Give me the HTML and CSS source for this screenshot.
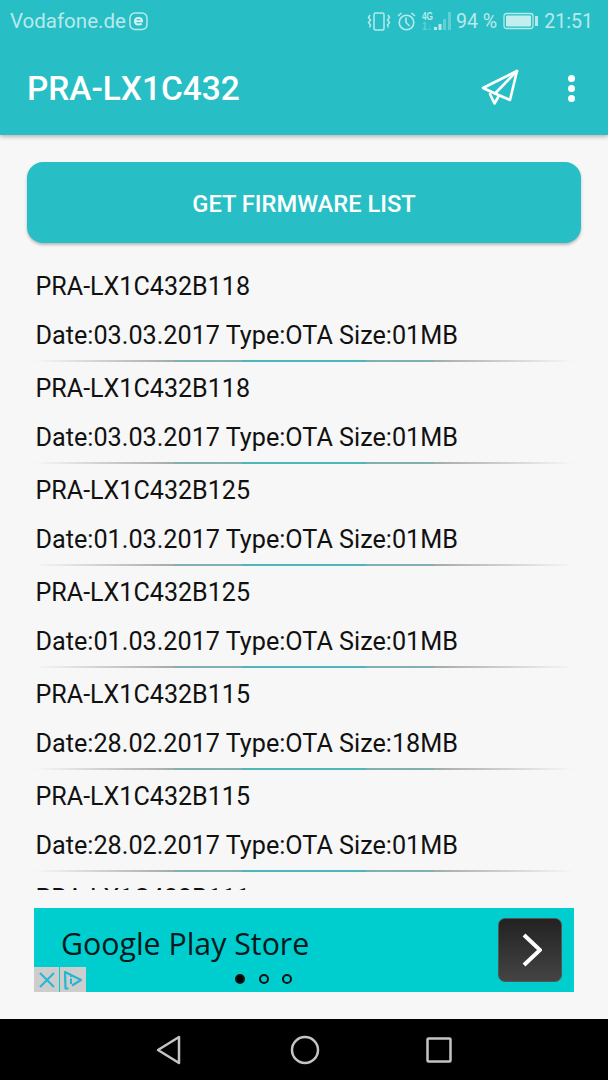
FILE: index.html
```html
<!DOCTYPE html>
<html lang="en">

<head>
    <meta charset="UTF-8">
    <meta name="viewport" content="width=device-width, initial-scale=1.0">
    <title>PRA-LX1C432</title>
    <link rel="stylesheet" href="styles.css">
</head>

<body>
    <div class="app">
        <header class="app-header">
            <div class="status-bar">
                <div class="status-left">
                    <span>Vodafone.de</span>
                    <svg class="eset-icon" width="20" height="20" viewBox="0 0 20 20">
                        <rect x="1" y="2" width="17" height="16.500" rx="5" fill="none" stroke="#b9e9eb" stroke-width="1.500"/>
                        <path d="M6 10.200h7c0-2-1.400-3.300-3.400-3.300S6 8.200 6 10.200s1.500 3.300 3.600 3.300c1.200 0 2.300-.4 3-1" fill="none" stroke="#d5f3f4" stroke-width="2"/>
                    </svg>
                </div>
                <div class="status-right">
                    <svg width="24" height="20" viewBox="0 0 24 20" fill="none" stroke="#b9e9eb" stroke-width="1.500">
                        <rect x="7" y="2" width="10" height="17" rx="1.500"/>
                        <path d="M3 4 1.500 6.500 3.500 9 1.500 11.500 3.500 14 2.500 16.500M21 4l1.500 2.500-2 2.500 2 2.500-2 2.500 1 2.500"/>
                    </svg>
                    <svg width="19" height="20" viewBox="0 0 19 20" fill="none" stroke="#b9e9eb" stroke-width="1.600">
                        <circle cx="9.500" cy="11.500" r="7.300"/>
                        <path d="M9 6.500V11.500l3.500 3.500M1 5l3.500-3M18 5l-3.500-3"/>
                    </svg>
                    <svg class="signal-icon" width="30" height="20" viewBox="0 0 30 20">
                        <text x="0" y="9" class="signal-label" textLength="11" lengthAdjust="spacingAndGlyphs">4G</text>
                        <text x="0" y="19" class="signal-label signal-dim" textLength="10" lengthAdjust="spacingAndGlyphs">1↓</text>
                        <g fill="#b9e9eb">
                            <rect x="12" y="16" width="3" height="3"/>
                            <rect x="16.500" y="13" width="3" height="6"/>
                        </g>
                        <g fill="#b9e9eb" opacity="0.4">
                            <rect x="21" y="8" width="3" height="11"/>
                            <rect x="26" y="1" width="3" height="18"/>
                        </g>
                    </svg>
                    <span class="battery-text">94 %</span>
                    <svg class="battery-icon" width="35" height="20" viewBox="0 0 35 20">
                        <rect x="1" y="2.500" width="29" height="15" rx="2.500" fill="none" stroke="#b9e9eb" stroke-width="1.300"/>
                        <rect x="3" y="4.500" width="25" height="11" rx="1" fill="#c3eeef"/>
                        <rect x="32" y="5" width="3" height="10" fill="#b9e9eb"/>
                    </svg>
                    <span class="status-time">21:51</span>
                </div>
            </div>
            <div class="toolbar">
                <h1 class="toolbar-title">PRA-LX1C432</h1>
                <svg class="send-icon" width="38" height="36" viewBox="0 0 38 36" fill="none" stroke="#fff" stroke-width="2.600" stroke-linejoin="round" stroke-linecap="round">
                    <path d="M36 2 2 19l12 5.500L29 31z"/>
                    <path d="M36 2 14 24.500"/>
                    <path d="M9 25l4.500 9.500 4-7"/>
                </svg>
                <div class="more-icon">
                    <span></span>
                    <span></span>
                    <span></span>
                </div>
            </div>
        </header>

        <main class="content">
            <button class="list-button">GET FIRMWARE LIST</button>

            <ul class="firmware-list">
                <li class="firmware-row">
                    <p>PRA-LX1C432B118</p>
                    <p>Date:03.03.2017 Type:OTA Size:01MB</p>
                </li>
                <li class="firmware-row">
                    <p>PRA-LX1C432B118</p>
                    <p>Date:03.03.2017 Type:OTA Size:01MB</p>
                </li>
                <li class="firmware-row">
                    <p>PRA-LX1C432B125</p>
                    <p>Date:01.03.2017 Type:OTA Size:01MB</p>
                </li>
                <li class="firmware-row">
                    <p>PRA-LX1C432B125</p>
                    <p>Date:01.03.2017 Type:OTA Size:01MB</p>
                </li>
                <li class="firmware-row">
                    <p>PRA-LX1C432B115</p>
                    <p>Date:28.02.2017 Type:OTA Size:18MB</p>
                </li>
                <li class="firmware-row">
                    <p>PRA-LX1C432B115</p>
                    <p>Date:28.02.2017 Type:OTA Size:01MB</p>
                </li>
                <li class="firmware-row">
                    <p>PRA-LX1C432B111</p>
                </li>
            </ul>

            <div class="ad-banner">
                <span class="ad-text">Google Play Store</span>
                <div class="ad-arrow">
                    <svg width="24" height="36" viewBox="0 0 24 36" fill="none" stroke="#fff" stroke-width="4">
                        <path d="M6 3l16 15L6 33"/>
                    </svg>
                </div>
                <div class="ad-dots">
                    <span class="ad-dot ad-dot-active"></span>
                    <span class="ad-dot"></span>
                    <span class="ad-dot"></span>
                </div>
                <div class="ad-badges">
                    <div class="ad-badge ad-badge-close">
                        <svg width="16" height="16" viewBox="0 0 16 16" fill="none" stroke="#22b8d0" stroke-width="2">
                            <path d="M1 1l14 14M15 1 1 15"/>
                        </svg>
                    </div>
                    <div class="ad-badge ad-badge-info">
                        <svg width="20" height="20" viewBox="0 0 20 20" fill="none" stroke="#22b8d0" stroke-width="2.200" stroke-linejoin="round">
                            <path d="M5.500 18.500H2.500L2 2l16 8-9 5.500"/>
                            <path d="M8 8.500v5.500" stroke-width="2"/>
                            <path d="M8 5.500v1.500" stroke-width="2"/>
                        </svg>
                    </div>
                </div>
            </div>
        </main>

        <nav class="nav-bar">
            <svg width="28" height="30" viewBox="0 0 28 30" fill="none" stroke="#c4c4c4" stroke-width="2.500" stroke-linejoin="round">
                <path d="M24 2v26L3 15z"/>
            </svg>
            <svg width="30" height="30" viewBox="0 0 30 30" fill="none" stroke="#c4c4c4" stroke-width="2.500">
                <circle cx="15" cy="15" r="13"/>
            </svg>
            <svg width="26" height="26" viewBox="0 0 26 26" fill="none" stroke="#c4c4c4" stroke-width="2.500" stroke-linejoin="round">
                <rect x="1.500" y="1.500" width="23" height="23" rx="1"/>
            </svg>
        </nav>
    </div>
</body>

</html>
```

FILE: styles.css
```css
* {
    box-sizing: border-box;
}

body {
    margin: 0;
    font-family: Roboto, "Liberation Sans", sans-serif;
    background-color: #f7f7f7;
    color: #111;
}

.app {
    display: flex;
    flex-direction: column;
    width: 608px;
    height: 1080px;
    overflow: hidden;
}

/* Header */
.app-header {
    height: 135px;
    flex-shrink: 0;
    background-color: #27bfc5;
    box-shadow: 0 2px 4px rgba(0, 0, 0, 0.25);
    position: relative;
    z-index: 1;
}

.status-bar {
    display: flex;
    justify-content: space-between;
    align-items: center;
    height: 42px;
    padding: 0 15px 0 10px;
    color: #b9e9eb;
}

.status-left,
.status-right {
    display: flex;
    align-items: center;
}

.status-left {
    font-size: 20.500px;
}

.status-right {
    font-size: 19.600px;
}

.eset-icon {
    margin-left: 3px;
}

.status-right svg {
    margin-right: 6px;
}

.status-right .signal-icon {
    margin-right: 4px;
}

.signal-label {
    font-family: "Liberation Sans", sans-serif;
    font-size: 10px;
    font-weight: bold;
    fill: #b9e9eb;
}

.signal-dim {
    opacity: 0.4;
}

.battery-text {
    margin-right: 6px;
}

.toolbar {
    display: flex;
    align-items: center;
    height: 93px;
    padding: 0 33px 0 27px;
}

.toolbar-title {
    flex: 1;
    margin: 0;
    font-size: 33.400px;
    font-weight: 500;
    color: #fff;
}

.send-icon {
    margin: -3px 49px 0 0;
}

.more-icon {
    display: flex;
    flex-direction: column;
    gap: 3px;
}

.more-icon span {
    width: 7px;
    height: 7px;
    border-radius: 50%;
    background-color: #fff;
}

/* Main content */
.content {
    flex: 1;
    display: flex;
    flex-direction: column;
    padding: 27px;
    min-height: 0;
}

.list-button {
    flex-shrink: 0;
    height: 81px;
    padding: 2px 0 0;
    border: none;
    border-radius: 16px;
    background-color: #27bfc5;
    box-shadow: 0 2px 3px rgba(0, 0, 0, 0.25);
    color: #fff;
    font-family: inherit;
    font-size: 23.700px;
    font-weight: 500;
}

.firmware-list {
    flex: 1;
    min-height: 0;
    list-style: none;
    overflow: hidden;
    margin: 17px 7px 18px;
    padding: 0;
}

.firmware-row {
    height: 102px;
    padding: 3px 0 0 1.500px;
    background-image: linear-gradient(to right, rgba(165, 169, 169, 0), #a5a9a9 26%, #82afaf 26%, #7fb0b0 38.500%, #4fb6bb 38.500%, #4fb6bb 61.500%, #7fb0b0 61.500%, #82afaf 74%, #a5a9a9 74%, rgba(165, 169, 169, 0));
    background-repeat: no-repeat;
    background-size: 100% 2px;
    background-position: bottom 0 left 0;
}

.firmware-row p {
    margin: 0;
    font-size: 25.100px;
    line-height: 48px;
    white-space: nowrap;
}

.firmware-row p + p {
    margin-top: 1px;
    font-size: 25.200px;
}

/* Ad banner */
.ad-banner {
    position: relative;
    flex-shrink: 0;
    display: flex;
    align-items: center;
    justify-content: space-between;
    height: 84px;
    margin: 0 7px;
    padding: 0 12px 0 27px;
    background-color: #00cdcd;
}

.ad-text {
    font-family: "Open Sans", sans-serif;
    font-size: 30.300px;
    color: #03191b;
    margin-top: -13px;
}

.ad-arrow {
    display: flex;
    align-items: center;
    justify-content: center;
    width: 64px;
    height: 64px;
    border: 1px solid #555;
    border-radius: 7px;
    background-image: linear-gradient(#222, #444);
}

.ad-dots {
    position: absolute;
    left: 201px;
    bottom: 8px;
    display: flex;
    gap: 13.500px;
}

.ad-dot {
    width: 10px;
    height: 10px;
    border: 2px solid #111;
    border-radius: 50%;
}

.ad-dot-active {
    background-color: #000;
}

.ad-badges {
    position: absolute;
    left: 0;
    bottom: 0;
    display: flex;
    gap: 1px;
}

.ad-badge {
    display: flex;
    align-items: center;
    justify-content: center;
    height: 25px;
    background-color: #cdcdcd;
}

.ad-badge-close {
    width: 25px;
}

.ad-badge-info {
    width: 26px;
}

/* Navigation bar */
.nav-bar {
    flex-shrink: 0;
    display: flex;
    align-items: center;
    justify-content: space-between;
    height: 61px;
    padding: 0 156px 0 155px;
    background-color: #000;
}
```
